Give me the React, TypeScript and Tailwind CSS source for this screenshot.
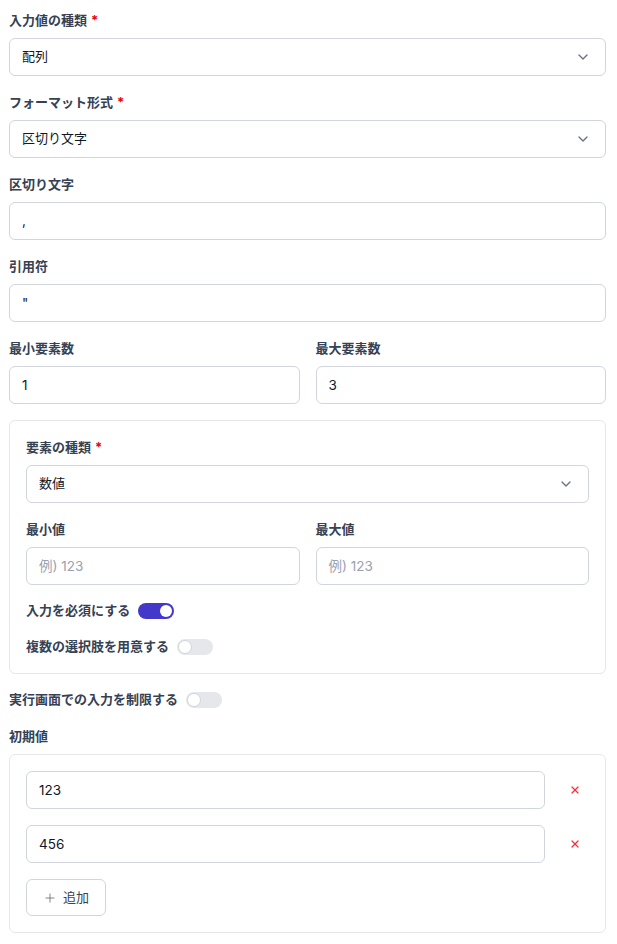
import React, { useState } from 'react';
import { ChevronDown, X, Plus } from 'lucide-react';

const font = { fontFamily: 'Inter, "Noto Sans CJK JP", sans-serif' };

const Label: React.FC<{ text: string; required?: boolean }> = ({ text, required }) => (
  <div className="mb-2 text-[13px] leading-5 font-bold text-gray-700">
    {text}
    {required && <span className="ml-1 text-red-600">*</span>}
  </div>
);

const SelectBox: React.FC<{ value: string }> = ({ value }) => (
  <div className="flex h-[38px] items-center justify-between rounded-md border border-gray-300 bg-white px-3 text-[13px] text-gray-900">
    <span>{value}</span>
    <ChevronDown className="mr-0.5 h-4 w-4 text-gray-500" strokeWidth={2} />
  </div>
);

const TextBox: React.FC<{ value?: string; placeholder?: string }> = ({ value, placeholder }) => (
  <div className="flex h-[38px] items-center rounded-md border border-gray-300 bg-white px-3 text-[13.5px]">
    {value ? <span className="text-gray-900">{value}</span> : <span className="text-gray-400">{placeholder}</span>}
  </div>
);

const Toggle: React.FC<{ label: string; on: boolean; onClick: () => void }> = ({ label, on, onClick }) => (
  <div className="flex h-5 items-center gap-2 text-[13px] font-bold text-gray-700">
    <span>{label}</span>
    <button
      onClick={onClick}
      className={
        on
          ? 'flex h-4 w-9 items-center justify-end rounded-full bg-[#4338ca] px-[2px]'
          : 'flex h-4 w-9 items-center justify-start rounded-full bg-gray-200 px-[1px]'
      }
    >
      <span className={on ? 'h-3 w-3 rounded-full bg-white' : 'h-3.5 w-3.5 rounded-full border border-gray-300 bg-white'} />
    </button>
  </div>
);

export default function App() {
  const [required, setRequired] = useState(true);
  const [multi, setMulti] = useState(false);
  const [limit, setLimit] = useState(false);

  return (
    <div className="min-h-screen bg-white pl-[9px] pr-[11px] pt-[10px] pb-4" style={font}>
      <div className="flex flex-col gap-4">
        <div>
          <Label text="入力値の種類" required />
          <SelectBox value="配列" />
        </div>
        <div>
          <Label text="フォーマット形式" required />
          <SelectBox value="区切り文字" />
        </div>
        <div>
          <Label text="区切り文字" />
          <TextBox value="," />
        </div>
        <div>
          <Label text="引用符" />
          <TextBox value={'"'} />
        </div>
        <div className="grid grid-cols-2 gap-4">
          <div>
            <Label text="最小要素数" />
            <TextBox value="1" />
          </div>
          <div>
            <Label text="最大要素数" />
            <TextBox value="3" />
          </div>
        </div>

        <div className="flex flex-col gap-4 rounded-md border border-gray-200 p-4">
          <div>
            <Label text="要素の種類" required />
            <SelectBox value="数値" />
          </div>
          <div className="grid grid-cols-2 gap-4">
            <div>
              <Label text="最小値" />
              <TextBox placeholder="例) 123" />
            </div>
            <div>
              <Label text="最大値" />
              <TextBox placeholder="例) 123" />
            </div>
          </div>
          <Toggle label="入力を必須にする" on={required} onClick={() => setRequired(!required)} />
          <Toggle label="複数の選択肢を用意する" on={multi} onClick={() => setMulti(!multi)} />
        </div>

        <Toggle label="実行画面での入力を制限する" on={limit} onClick={() => setLimit(!limit)} />

        <div>
          <div className="mb-2 text-[13px] leading-5 font-bold text-gray-700">初期値</div>
          <div className="flex flex-col gap-4 rounded-md border border-gray-200 p-4">
            {['123', '456'].map((v) => (
              <div key={v} className="flex items-center gap-4">
                <div className="flex-1">
                  <TextBox value={v} />
                </div>
                <button className="flex h-7 w-7 items-center justify-center text-red-500">
                  <X className="h-3 w-3" strokeWidth={2.5} />
                </button>
              </div>
            ))}
            <div>
              <button className="flex h-[37px] items-center gap-1.5 rounded-md border border-gray-300 bg-white pl-4 pr-4 text-[13px] text-gray-700">
                <Plus className="h-3.5 w-3.5 text-gray-500" strokeWidth={1.5} />
                追加
              </button>
            </div>
          </div>
        </div>
      </div>
    </div>
  );
}
